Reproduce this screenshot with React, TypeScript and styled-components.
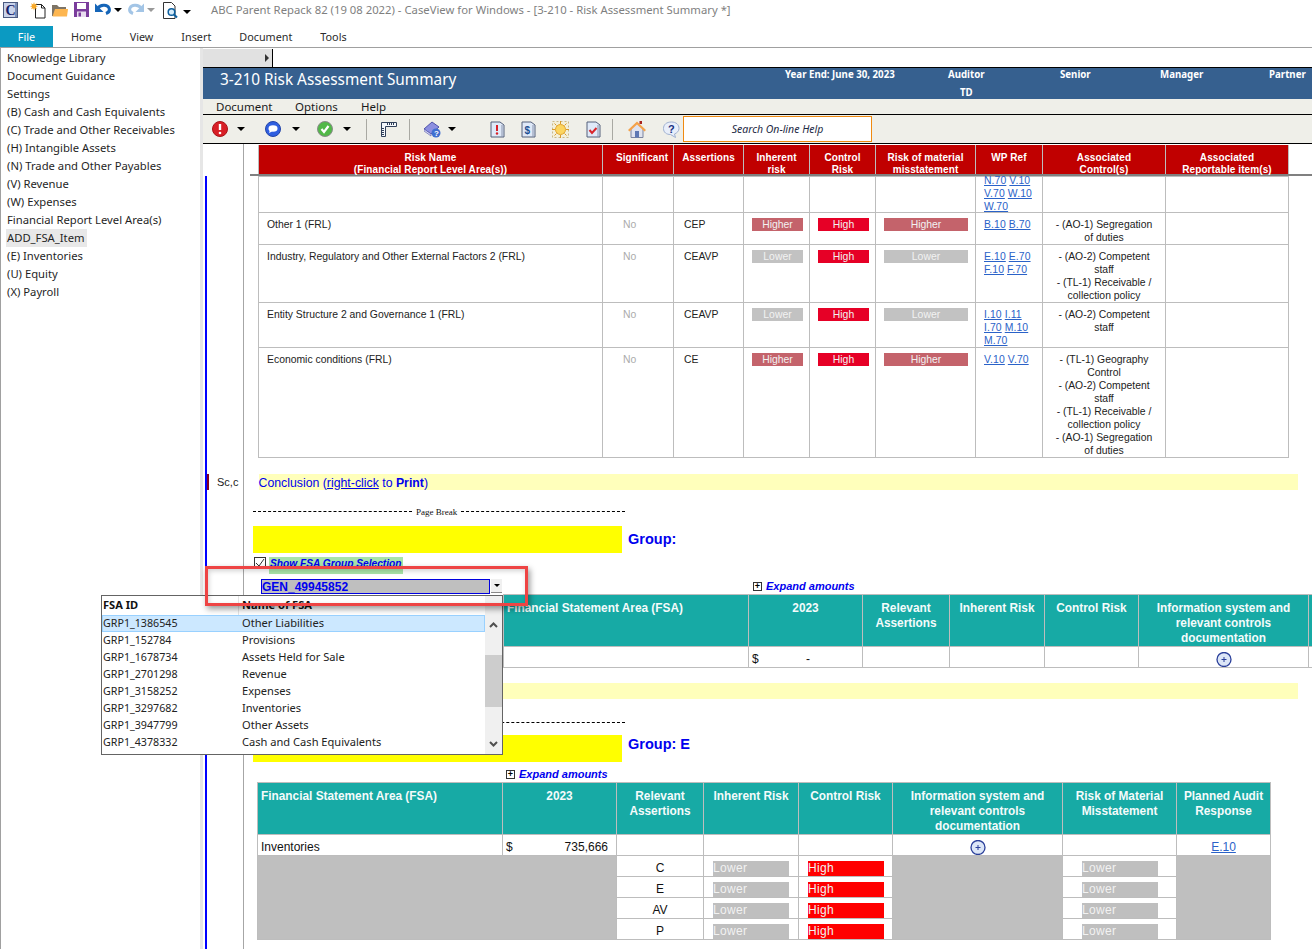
import * as React from 'react';
import styled, { createGlobalStyle } from 'styled-components';

const UI_FONT = '"Noto Sans", "Open Sans", sans-serif';
const DOC_FONT = '"Liberation Sans", Arial, sans-serif';
const GRID_LINE = '#bdbdbd';
const TEAL = '#17aaa5';
const LINK = '#2a62c8';

const GlobalStyle = createGlobalStyle`
  html, body {
    margin: 0;
    padding: 0;
    background: #fff;
  }
  * {
    box-sizing: border-box;
  }
`;

const Page = styled.div`
  position: relative;
  width: 1312px;
  height: 949px;
  overflow: hidden;
  display: flex;
  flex-direction: column;
  background: #fff;
  font-family: ${UI_FONT};
`;

const TitleBar = styled.div`
  height: 26px;
  display: flex;
  align-items: flex-start;
  padding: 2px 0 0 3px;
`;

const QuickIcon = styled.span<{ $ml?: number }>`
  display: inline-flex;
  margin-left: ${(p) => p.$ml ?? 0}px;
`;

const Caret = styled.span<{ $ml?: number; $color?: string; $top?: number }>`
  width: 0;
  height: 0;
  margin-left: ${(p) => p.$ml ?? 0}px;
  margin-top: ${(p) => p.$top ?? 0}px;
  border-left: 4px solid transparent;
  border-right: 4px solid transparent;
  border-top: 4px solid ${(p) => p.$color ?? '#000'};
`;

const WindowTitle = styled.div`
  margin-left: 20px;
  font-size: 11.3px;
  line-height: 16px;
  color: #7f7f7f;
  white-space: nowrap;
`;

const Ribbon = styled.div`
  height: 22px;
  display: flex;
  gap: 28px;
  border-bottom: 1px solid #a0a0a0;
  font-size: 10.8px;
  line-height: 21px;
  color: #2b2b2b;
`;

const FileTab = styled.div`
  width: 53px;
  margin-right: -10px;
  background: #0b9ac2;
  color: #fff;
  text-align: center;
`;

const Body = styled.div`
  flex: 1;
  display: flex;
  min-height: 0;
`;

const Sidebar = styled.nav`
  width: 203px;
  padding: 1px 0 0 5px;
  border-left: 1px solid #a0a0a0;
  border-right: 3px solid #e6e6e6;
`;

const SideItem = styled.div<{ $active?: boolean }>`
  width: fit-content;
  padding: 0 2px 0 1px;
  height: 18px;
  font-size: 11.25px;
  line-height: 18px;
  color: #1f1f1f;
  background: ${(p) => (p.$active ? '#e8e8e8' : 'transparent')};
`;

const Main = styled.main`
  flex: 1;
  min-width: 0;
  display: flex;
  flex-direction: column;
`;

const TopStrip = styled.div`
  height: 19px;
  padding-top: 1px;
`;

const TreeTab = styled.div`
  width: 70px;
  height: 18px;
  display: flex;
  align-items: center;
  justify-content: flex-end;
  padding-right: 3px;
  background: #e1e1e1;
  border-right: 1px solid #000;
  &::after {
    content: '';
    border-top: 4px solid transparent;
    border-bottom: 4px solid transparent;
    border-left: 4px solid #333;
  }
`;

const DocHeader = styled.header`
  height: 32px;
  display: flex;
  border-top: 1px solid #000;
  background: #36608f;
  color: #fff;
`;

const DocTitle = styled.h1`
  width: 582px;
  margin: 0;
  padding: 0 0 0 17px;
  font-size: 15.35px;
  line-height: 22px;
  font-weight: 400;
`;

const MetaColumn = styled.div<{ $w: number }>`
  width: ${(p) => p.$w}px;
  padding-top: 1px;
  font-size: 9.7px;
  line-height: 12px;
  font-weight: 700;
  white-space: nowrap;
`;

const MetaValue = styled.div`
  margin: 6px 0 0 12px;
`;

const MenuBar = styled.div`
  height: 16px;
  display: flex;
  padding-left: 13px;
  background: #efefe9;
  border-bottom: 1px solid #000;
  font-size: 11.5px;
  line-height: 15px;
  color: #1a1a1a;
`;

const MenuItem = styled.span<{ $w: number }>`
  width: ${(p) => p.$w}px;
`;

const Toolbar = styled.div`
  height: 29px;
  display: flex;
  align-items: center;
  padding-left: 9px;
  background: #efefe9;
  border-bottom: 1px solid #000;
`;

const ToolSep = styled.span<{ $ml: number }>`
  width: 1px;
  height: 21px;
  margin-left: ${(p) => p.$ml}px;
  background: #a9a9a3;
`;

const SearchBox = styled.div`
  width: 189px;
  height: 26px;
  margin-left: 3px;
  display: flex;
  align-items: center;
  justify-content: center;
  background: #fff;
  border: 1px solid #f08a10;
  font-size: 10.5px;
  font-style: italic;
  color: #1d2a44;
`;

const DocArea = styled.div`
  flex: 1;
  min-height: 0;
  display: flex;
  overflow: hidden;
`;

const Gutter = styled.div`
  width: 41px;
  flex: none;
  padding-left: 2px;
  border-right: 1px solid #a6a6a6;
`;

const GutterLine = styled.div`
  height: 100%;
  margin-top: 32px;
  padding-top: 298px;
  border-left: 2px solid #0000ff;
`;

const ScopeMark = styled.div`
  height: 16px;
  overflow: hidden;
  border-left: 2px solid #800020;
  padding-left: 8px;
  font-family: ${DOC_FONT};
  font-size: 11px;
  line-height: 17px;
  color: #222;
`;

const DocContent = styled.div`
  flex: 1;
  min-width: 0;
  font-family: ${DOC_FONT};
`;

const FrozenHead = styled.div`
  margin: 1px 0 0 6px;
  padding-left: 8px;
  border-bottom: 2px solid #808080;
`;

const RiskTable = styled.table`
  width: 1030px;
  table-layout: fixed;
  border-collapse: collapse;
  font-size: 10.4px;
  line-height: 13px;
  color: #222;
`;

const RiskHeadCell = styled.th`
  height: 29px;
  padding: 7px 0 0;
  vertical-align: top;
  background: #c00000;
  border-left: 1px solid ${GRID_LINE};
  border-right: 1px solid ${GRID_LINE};
  color: #fff;
  font-size: 10px;
  line-height: 12px;
  font-weight: 700;
  letter-spacing: 0.1px;
  &:nth-child(2) {
    padding-left: 8px;
  }
`;

const RiskHeadLines = styled.div`
  margin-bottom: -2px;
`;

const RiskBodyClip = styled.div`
  margin-left: 14px;
  overflow: hidden;
`;

const RiskRow = styled.tr<{ $h: number }>`
  height: ${(p) => p.$h}px;
`;

const RiskCell = styled.td<{ $align?: string; $muted?: boolean; $pad?: string }>`
  padding: ${(p) => p.$pad ?? '5px 7px 0 8px'};
  vertical-align: top;
  border: 1px solid ${GRID_LINE};
  text-align: ${(p) => p.$align ?? 'left'};
  color: ${(p) => (p.$muted ? '#ababab' : '#222')};
`;

const RiskBadge = styled.div<{ $bg: string }>`
  height: 13px;
  background: ${(p) => p.$bg};
  color: #f2f2f2;
  text-align: center;
`;

// the first row is scrolled a little under the frozen header
const ScrolledRefs = styled.div`
  margin: -3px 0 -2px;
`;

const RefLine = styled.div`
  display: flex;
  gap: 3px;
  white-space: nowrap;
  letter-spacing: 0.1px;
`;

const RefLink = styled.a`
  color: ${LINK};
  text-decoration: underline;
`;

const Conclusion = styled.div<{ $mt: number }>`
  width: 1039px;
  height: 16px;
  margin: ${(p) => p.$mt}px 0 0 14.5px;
  background: #ffffbb;
  color: #0000ee;
  font-size: 12.3px;
  line-height: 18px;
  white-space: nowrap;
`;

const Underlined = styled.span`
  text-decoration: underline;
`;

const PageBreak = styled.div<{ $mt: number }>`
  width: 372px;
  height: 11px;
  margin: ${(p) => p.$mt}px 0 0 9px;
  display: flex;
  align-items: center;
  gap: 4px;
  font-family: "Liberation Serif", serif;
  font-size: 9px;
  color: #111;
  &::before,
  &::after {
    content: '';
    height: 0;
    border-top: 1px dashed #000;
  }
  &::before {
    flex: 0 0 159px;
  }
  &::after {
    flex: 1;
  }
`;

const GroupRow = styled.div<{ $mt: number }>`
  margin: ${(p) => p.$mt}px 0 0 9px;
  display: flex;
  align-items: center;
  gap: 6px;
  color: #0000ee;
  font-size: 14.5px;
  font-weight: 700;
`;

const GroupLabel = styled.span<{ $lift: number }>`
  margin-bottom: ${(p) => p.$lift}px;
`;

const YellowField = styled.div`
  width: 369px;
  height: 27px;
  background: #ffff00;
`;

const CheckRow = styled.div`
  height: 22px;
  margin: 4px 0 0 10px;
  display: flex;
  align-items: flex-start;
  gap: 3px;
`;

const CheckBox = styled.span`
  width: 12px;
  height: 12px;
  display: flex;
  align-items: center;
  justify-content: center;
  border: 1px solid #333;
  background: #fff;
`;

const GreenLabel = styled.span`
  height: 17px;
  padding: 0 1px;
  background: #a8e4a8;
  color: #0000ee;
  font-size: 10.2px;
  line-height: 14px;
  font-weight: 700;
  font-style: italic;
  text-decoration: underline;
`;

const ComboRow = styled.div`
  height: 15px;
  margin-left: 17px;
  display: flex;
  align-items: flex-start;
`;

const ComboField = styled.div`
  width: 229px;
  height: 15px;
  border: 1px solid #0000e0;
  background: #bfbfbf;
  color: #0000ee;
  font-size: 12px;
  line-height: 14px;
  font-weight: 700;
`;

const ComboButton = styled.div`
  width: 11px;
  height: 14px;
  margin-left: 1px;
  display: flex;
  align-items: center;
  justify-content: center;
  background: #f0f0f0;
  border-bottom: 1px solid #888;
  &::after {
    content: '';
    border-left: 3px solid transparent;
    border-right: 3px solid transparent;
    border-top: 3px solid #000;
  }
`;

const ExpandToggle = styled.div<{ $ml: number; $mt?: number }>`
  height: 14px;
  margin: ${(p) => p.$mt ?? 0}px 0 0 ${(p) => p.$ml}px;
  display: flex;
  align-items: center;
  gap: 4px;
  color: #0000ee;
  font-size: 11px;
  font-weight: 700;
  font-style: italic;
  white-space: nowrap;
`;

const PlusBox = styled.span`
  width: 9px;
  height: 9px;
  display: flex;
  align-items: center;
  justify-content: center;
  border: 1px solid #333;
  background: #fff;
  font: 700 9px/7px ${DOC_FONT};
  color: #000;
`;

const FsaTable = styled.table<{ $ml: number; $mt: number }>`
  width: 1013px;
  margin: ${(p) => p.$mt}px 0 0 ${(p) => p.$ml}px;
  table-layout: fixed;
  border-collapse: collapse;
  font-size: 12px;
  line-height: 15px;
  color: #111;
`;

const FsaHeadCell = styled.th<{ $left?: boolean }>`
  height: 51px;
  padding: 6px 2px 0 ${(p) => (p.$left ? 3 : 2)}px;
  vertical-align: top;
  text-align: ${(p) => (p.$left ? 'left' : 'center')};
  background: ${TEAL};
  border: 1px solid ${GRID_LINE};
  color: #f4fbfb;
  font-size: 11.85px;
  font-weight: 700;
`;

const FsaRow = styled.tr<{ $h: number }>`
  height: ${(p) => p.$h}px;
`;

const FsaCell = styled.td<{ $center?: boolean; $fill?: boolean; $pad?: string }>`
  padding: ${(p) => p.$pad ?? '0 2px'};
  vertical-align: bottom;
  border: 1px solid ${GRID_LINE};
  text-align: ${(p) => (p.$center ? 'center' : 'left')};
  background: ${(p) => (p.$fill ? '#bfbfbf' : '#fff')};
`;

const AmountLine = styled.div<{ $pr: number }>`
  display: flex;
  justify-content: space-between;
  padding: 0 ${(p) => p.$pr}px 0 1px;
`;

const FlagBar = styled.div<{ $bg: string; $ml: number }>`
  width: 76px;
  height: 15px;
  margin-left: ${(p) => p.$ml}px;
  background: ${(p) => p.$bg};
  color: #f2f2f2;
  font-size: 12px;
  line-height: 15px;
  letter-spacing: 0.3px;
`;

const LookupPopup = styled.div`
  position: absolute;
  left: 101px;
  top: 595px;
  width: 402px;
  height: 160px;
  display: flex;
  background: #fff;
  border: 1px solid #646464;
`;

const LookupList = styled.div`
  flex: 1;
  font-size: 11.1px;
`;

const LookupHead = styled.div`
  height: 19px;
  display: grid;
  grid-template-columns: 136px 1fr;
  font-weight: 700;
  line-height: 18px;
  color: #111;
`;

const LookupHeadCell = styled.div`
  padding-left: 1px;
  &:nth-child(2) {
    padding-left: 3px;
    border-left: 1px solid #e4e4e4;
  }
`;

const LookupRow = styled.div<{ $selected?: boolean }>`
  height: 17px;
  display: grid;
  grid-template-columns: 139px 1fr;
  padding-left: 1px;
  line-height: 16px;
  color: #222;
  background: ${(p) => (p.$selected ? '#cce8ff' : 'transparent')};
  box-shadow: ${(p) => (p.$selected ? 'inset 0 0 0 1px #99d1ff' : 'none')};
`;

const LookupId = styled.span`
  font-size: 10.7px;
`;

const ScrollTrack = styled.div`
  width: 17px;
  display: flex;
  flex-direction: column;
  align-items: center;
  background: #f0f0f0;
  padding-top: 19px;
`;

const ScrollArrow = styled.div`
  height: 21px;
  display: flex;
  align-items: center;
  justify-content: center;
`;

const ScrollThumb = styled.div`
  width: 100%;
  height: 53px;
  margin-top: 19px;
  margin-bottom: 26px;
  background: #cdcdcd;
`;

const CalloutFrame = styled.div`
  position: absolute;
  left: 205px;
  top: 566px;
  width: 323px;
  height: 40px;
  border: 3px solid #ee4444;
  box-shadow: 2px 3px 6px rgba(0, 0, 0, 0.4), inset 1px 2px 5px rgba(0, 0, 0, 0.18);
`;

const sidebarItems = [
  'Knowledge Library',
  'Document Guidance',
  'Settings',
  '(B) Cash and Cash Equivalents',
  '(C) Trade and Other Receivables',
  '(H) Intangible Assets',
  '(N) Trade and Other Payables',
  '(V) Revenue',
  '(W) Expenses',
  'Financial Report Level Area(s)',
  'ADD_FSA_Item',
  '(E) Inventories',
  '(U) Equity',
  '(X) Payroll',
];

const riskColumns = [344, 71, 70, 66, 66, 100, 67, 123, 123];
const riskHead = [
  ['Risk Name', '(Financial Report Level Area(s))'],
  ['Significant'],
  ['Assertions'],
  ['Inherent', 'risk'],
  ['Control', 'Risk'],
  ['Risk of material', 'misstatement'],
  ['WP Ref'],
  ['Associated', 'Control(s)'],
  ['Associated', 'Reportable item(s)'],
];

type RiskItem = {
  name: string;
  assertions: string;
  level: 'Higher' | 'Lower';
  refs: string[][];
  controls: string[];
  height: number;
};

const riskItems: RiskItem[] = [
  {
    name: 'Other 1 (FRL)',
    assertions: 'CEP',
    level: 'Higher',
    refs: [['B.10', 'B.70']],
    controls: ['- (AO-1) Segregation', 'of duties'],
    height: 32,
  },
  {
    name: 'Industry, Regulatory and Other External Factors 2 (FRL)',
    assertions: 'CEAVP',
    level: 'Lower',
    refs: [['E.10', 'E.70'], ['F.10', 'F.70']],
    controls: ['- (AO-2) Competent', 'staff', '- (TL-1) Receivable /', 'collection policy'],
    height: 58,
  },
  {
    name: 'Entity Structure 2 and Governance 1 (FRL)',
    assertions: 'CEAVP',
    level: 'Lower',
    refs: [['I.10', 'I.11'], ['I.70', 'M.10'], ['M.70']],
    controls: ['- (AO-2) Competent', 'staff'],
    height: 45,
  },
  {
    name: 'Economic conditions (FRL)',
    assertions: 'CE',
    level: 'Higher',
    refs: [['V.10', 'V.70']],
    controls: [
      '- (TL-1) Geography',
      'Control',
      '- (AO-2) Competent',
      'staff',
      '- (TL-1) Receivable /',
      'collection policy',
      '- (AO-1) Segregation',
      'of duties',
    ],
    height: 110,
  },
];

const fsaColumns = [245, 114, 87, 95, 94, 170, 114, 94];
const fsaHead = [
  'Financial Statement Area (FSA)',
  '2023',
  'Relevant Assertions',
  'Inherent Risk',
  'Control Risk',
  'Information system and relevant controls documentation',
  'Risk of Material Misstatement',
  'Planned Audit Response',
];
// the upper table runs off the right edge, its last two headings are out of view
const fsaHeadClipped = fsaHead.slice(0, 6).concat(['', '']);

const lookupRows = [
  ['GRP1_1386545', 'Other Liabilities'],
  ['GRP1_152784', 'Provisions'],
  ['GRP1_1678734', 'Assets Held for Sale'],
  ['GRP1_2701298', 'Revenue'],
  ['GRP1_3158252', 'Expenses'],
  ['GRP1_3297682', 'Inventories'],
  ['GRP1_3947799', 'Other Assets'],
  ['GRP1_4378332', 'Cash and Cash Equivalents'],
];

const levelColor = (level: string): string => (level === 'Higher' ? '#c4636b' : '#c2c2c2');

function AppIcon(): JSX.Element {
  return (
    <svg width="15" height="16" viewBox="0 0 15 16">
      <rect x="0.5" y="0.5" width="14" height="15" fill="#c9d3ea" stroke="#4a5a80" />
      <rect x="12" y="1" width="2" height="14" fill="#7f8fb5" />
      <text x="2.5" y="13" fontFamily="Liberation Serif" fontWeight="700" fontSize="14" fill="#14206a">
        C
      </text>
    </svg>
  );
}

function NewDocIcon(): JSX.Element {
  return (
    <svg width="17" height="17" viewBox="0 0 17 17">
      <path d="M5.5 2.5h6l3.5 3.5v10h-9.5z" fill="#fff" stroke="#222" />
      <path d="M11.5 2.5v3.5h3.5" fill="none" stroke="#222" />
      <path
        d="M4 0l.8 2.4L7 1.3 5.9 3.5 8 4.3l-2.1.8L7 7.3 4.8 6.2 4 8.6l-.8-2.4L1 7.3l1.1-2.2L0 4.3l2.1-.8L1 1.3l2.2 1.1z"
        fill="#f9a825"
      />
    </svg>
  );
}

function FolderIcon(): JSX.Element {
  return (
    <svg width="16" height="15" viewBox="0 0 16 15">
      <path d="M0 3h5l2 2h7v9H0z" fill="#7d7466" />
      <path d="M3 7h13l-1 7.500H0.500z" fill="#fdb650" />
    </svg>
  );
}

function SaveIcon(): JSX.Element {
  return (
    <svg width="15" height="15" viewBox="0 0 15 15">
      <path d="M0 0h15v15H0z" fill="#7a3c9c" />
      <rect x="3" y="1" width="9" height="6" fill="#fff" />
      <rect x="3" y="9.500" width="9" height="5.500" fill="#e9def0" />
      <rect x="4.500" y="10.500" width="2.500" height="4" fill="#7a3c9c" />
    </svg>
  );
}

function ArcArrow({ color, flip }: { color: string; flip?: boolean }): JSX.Element {
  return (
    <svg width="16" height="13" viewBox="0 0 16 13" style={flip ? { transform: 'scaleX(-1)' } : undefined}>
      <path d="M3 6C5 3 12 1.500 14 6c1 2.500-.5 4.500-3 5.500" fill="none" stroke={color} strokeWidth="3" />
      <path d="M0 1.500V10h8.500z" fill={color} />
    </svg>
  );
}

function PreviewIcon(): JSX.Element {
  return (
    <svg width="15" height="17" viewBox="0 0 15 17">
      <path d="M.5.500h8l3.500 3.500v12.500H.5z" fill="#fff" stroke="#333" />
      <circle cx="8.500" cy="10" r="3.300" fill="#d6ecfa" stroke="#0d5f9e" strokeWidth="1.500" />
      <path d="M11 12.500l3 3" stroke="#0d5f9e" strokeWidth="2" />
    </svg>
  );
}

function RoundGlyph({ fill, ring, children }: { fill: string; ring: string; children: React.ReactNode }): JSX.Element {
  return (
    <svg width="16" height="16" viewBox="0 0 16 16">
      <circle cx="8" cy="8" r="7.500" fill={fill} stroke={ring} />
      {children}
    </svg>
  );
}

function BookIcon(): JSX.Element {
  return (
    <svg width="17" height="17" viewBox="0 0 17 17">
      <path d="M0 8l8-7 7 5-8 7z" fill="#8c8fe0" stroke="#4f52a8" />
      <path d="M0 8l7 5v2l-7-5z" fill="#d6d7f5" stroke="#4f52a8" strokeWidth="0.600" />
      <circle cx="12" cy="12" r="4.500" fill="#3f6fd0" />
      <text x="10" y="15" fontFamily="Liberation Sans" fontWeight="700" fontSize="8" fill="#fff">
        ?
      </text>
    </svg>
  );
}

function RulerIcon(): JSX.Element {
  return (
    <svg width="16" height="15" viewBox="0 0 16 15">
      <path d="M.5.500h15v4h-11v10h-4z" fill="#f4f7fb" stroke="#30405a" />
      <path d="M6.500 1v2M8.500 1v2M10.500 1v2M12.500 1v2M1 6.500h2M1 8.500h2M1 10.500h2M1 12.500h2" stroke="#30405a" />
    </svg>
  );
}

function PageGlyph({ children }: { children: React.ReactNode }): JSX.Element {
  return (
    <svg width="15" height="17" viewBox="0 0 15 17">
      <path d="M1 1h9l4 3v12H1z" fill="#dfe9f8" stroke="#55607a" />
      <path d="M12 4v12" stroke="#8a94ad" />
      {children}
    </svg>
  );
}

function SunIcon(): JSX.Element {
  return (
    <svg width="17" height="17" viewBox="0 0 17 17">
      <rect x="0.500" y="0.500" width="16" height="16" fill="#f3efd8" stroke="#c9b888" strokeDasharray="2 2" />
      <path d="M8.500 0v3M8.500 14v3M0 8.500h3M14 8.500h3M2.500 2.500l2 2M12.500 12.500l2 2M14.500 2.500l-2 2M4.500 12.500l-2 2" stroke="#d99a2b" />
      <circle cx="8.500" cy="8.500" r="5" fill="#fcd55f" stroke="#e0a530" />
    </svg>
  );
}

function HomeIcon(): JSX.Element {
  return (
    <svg width="18" height="17" viewBox="0 0 18 17">
      <path d="M3 8v8.500h12V8L9 2z" fill="#dfe3ef" stroke="#7b84a0" />
      <path d="M0 9l9-8.500L18 9l-1.500 1.500L9 3.500 1.500 10.500z" fill="#f4a24a" />
      <rect x="11.500" y="0" width="2.500" height="3" fill="#a8221e" />
      <rect x="7" y="10" width="4" height="6.500" fill="#5d78b4" />
    </svg>
  );
}

function HelpBubbleIcon(): JSX.Element {
  return (
    <svg width="17" height="17" viewBox="0 0 17 17">
      <path d="M8.500 1C3.500 1 .5 3.500.5 7.500s3 6 7 6l5 3-1-3.500c2.500-1 4.500-3 4.500-5.500C16 3.500 13 1 8.500 1z" fill="#e8eefa" stroke="#9fb0d0" />
      <text x="5" y="12" fontFamily="Liberation Sans" fontWeight="700" fontSize="11" fill="#18307f">
        ?
      </text>
    </svg>
  );
}

function ExpandCircle(): JSX.Element {
  return (
    <svg width="16" height="15" viewBox="0 0 16 15" style={{ display: 'block', margin: '0 auto' }}>
      <circle cx="8" cy="7.500" r="7" fill="#dce6f7" stroke="#2a3f9a" strokeWidth="1.300" />
      <path d="M5.500 7.500h5M8 5v5" stroke="#2a3f9a" />
    </svg>
  );
}

function Chevron({ up }: { up?: boolean }): JSX.Element {
  return (
    <svg width="9" height="6" viewBox="0 0 9 6">
      <path d={up ? 'M1 5l3.500-3.500L8 5' : 'M1 1l3.500 3.500L8 1'} fill="none" stroke="#505050" strokeWidth="2" />
    </svg>
  );
}

function RefLines({ lines }: { lines: string[][] }): JSX.Element {
  return (
    <>
      {lines.map((line) => (
        <RefLine key={line.join()}>
          {line.map((ref) => (
            <RefLink key={ref}>{ref}</RefLink>
          ))}
        </RefLine>
      ))}
    </>
  );
}

function RiskCols(): JSX.Element {
  return (
    <colgroup>
      {riskColumns.map((w, i) => (
        <col key={i} style={{ width: w }} />
      ))}
    </colgroup>
  );
}

function FsaCols(): JSX.Element {
  return (
    <colgroup>
      {fsaColumns.map((w, i) => (
        <col key={i} style={{ width: w }} />
      ))}
    </colgroup>
  );
}

function FsaHeader({ labels }: { labels: string[] }): JSX.Element {
  return (
    <thead>
      <tr>
        {labels.map((label, i) => (
          <FsaHeadCell key={i} $left={i === 0}>
            {label}
          </FsaHeadCell>
        ))}
      </tr>
    </thead>
  );
}

export default function App(): JSX.Element {
  return (
    <Page>
      <GlobalStyle />
      <TitleBar>
        <AppIcon />
        <QuickIcon $ml={12}>
          <NewDocIcon />
        </QuickIcon>
        <QuickIcon $ml={5}>
          <FolderIcon />
        </QuickIcon>
        <QuickIcon $ml={6}>
          <SaveIcon />
        </QuickIcon>
        <QuickIcon $ml={6}>
          <ArcArrow color="#1565b8" />
        </QuickIcon>
        <Caret $ml={3} $top={6} />
        <QuickIcon $ml={6}>
          <ArcArrow color="#a3c5e6" flip />
        </QuickIcon>
        <Caret $ml={3} $top={6} $color="#999" />
        <QuickIcon $ml={8}>
          <PreviewIcon />
        </QuickIcon>
        <Caret $ml={5} $top={8} />
        <WindowTitle>ABC Parent Repack 82 (19 08 2022) - CaseView for Windows - [3-210 - Risk Assessment Summary *]</WindowTitle>
      </TitleBar>
      <Ribbon>
        <FileTab>File</FileTab>
        <span>Home</span>
        <span>View</span>
        <span>Insert</span>
        <span>Document</span>
        <span>Tools</span>
      </Ribbon>
      <Body>
        <Sidebar>
          {sidebarItems.map((item) => (
            <SideItem key={item} $active={item === 'ADD_FSA_Item'}>
              {item}
            </SideItem>
          ))}
        </Sidebar>
        <Main>
          <TopStrip>
            <TreeTab />
          </TopStrip>
          <DocHeader>
            <DocTitle>3-210 Risk Assessment Summary</DocTitle>
            <MetaColumn $w={163}>Year End: June 30, 2023</MetaColumn>
            <MetaColumn $w={112}>
              Auditor
              <MetaValue>TD</MetaValue>
            </MetaColumn>
            <MetaColumn $w={100}>Senior</MetaColumn>
            <MetaColumn $w={109}>Manager</MetaColumn>
            <MetaColumn $w={43}>Partner</MetaColumn>
          </DocHeader>
          <MenuBar>
            <MenuItem $w={79}>Document</MenuItem>
            <MenuItem $w={66}>Options</MenuItem>
            <MenuItem $w={40}>Help</MenuItem>
          </MenuBar>
          <Toolbar>
            <QuickIcon>
              <RoundGlyph fill="#d81f26" ring="#a81218">
                <path d="M8 3v6" stroke="#fff" strokeWidth="2.400" />
                <circle cx="8" cy="12" r="1.300" fill="#fff" />
              </RoundGlyph>
            </QuickIcon>
            <Caret $ml={9} />
            <QuickIcon $ml={20}>
              <RoundGlyph fill="#2f5fe0" ring="#2344a8">
                <ellipse cx="8" cy="7.500" rx="4.500" ry="3.300" fill="#fff" />
                <path d="M5 9l-1 3 3-1.500z" fill="#fff" />
              </RoundGlyph>
            </QuickIcon>
            <Caret $ml={11} />
            <QuickIcon $ml={17}>
              <RoundGlyph fill="#52b848" ring="#8a8a8a">
                <path d="M4.500 8l2.500 3 4.500-6" fill="none" stroke="#fff" strokeWidth="2.200" />
              </RoundGlyph>
            </QuickIcon>
            <Caret $ml={10} />
            <ToolSep $ml={15} />
            <QuickIcon $ml={14}>
              <RulerIcon />
            </QuickIcon>
            <ToolSep $ml={12} />
            <QuickIcon $ml={14}>
              <BookIcon />
            </QuickIcon>
            <Caret $ml={7} />
            <QuickIcon $ml={34}>
              <PageGlyph>
                <path d="M7 4v6" stroke="#d81f26" strokeWidth="2" />
                <circle cx="7" cy="12.500" r="1.200" fill="#d81f26" />
              </PageGlyph>
            </QuickIcon>
            <QuickIcon $ml={16}>
              <PageGlyph>
                <text x="3.500" y="13" fontFamily="Liberation Sans" fontWeight="700" fontSize="10" fill="#1d4f91">
                  $
                </text>
              </PageGlyph>
            </QuickIcon>
            <QuickIcon $ml={16}>
              <SunIcon />
            </QuickIcon>
            <QuickIcon $ml={17}>
              <PageGlyph>
                <path d="M3.500 9l2.500 3 4.500-5" fill="none" stroke="#d8252a" strokeWidth="2" />
              </PageGlyph>
            </QuickIcon>
            <ToolSep $ml={11} />
            <QuickIcon $ml={15}>
              <HomeIcon />
            </QuickIcon>
            <QuickIcon $ml={17}>
              <HelpBubbleIcon />
            </QuickIcon>
            <SearchBox>Search On-line Help</SearchBox>
          </Toolbar>
          <DocArea>
            <Gutter>
              <GutterLine>
                <ScopeMark>Sc,c</ScopeMark>
              </GutterLine>
            </Gutter>
            <DocContent>
              <FrozenHead>
                <RiskTable>
                  <RiskCols />
                  <thead>
                    <tr>
                      {riskHead.map((lines) => (
                        <RiskHeadCell key={lines.join()}>
                          <RiskHeadLines>
                            {lines.map((line) => (
                              <div key={line}>{line}</div>
                            ))}
                          </RiskHeadLines>
                        </RiskHeadCell>
                      ))}
                    </tr>
                  </thead>
                </RiskTable>
              </FrozenHead>
              <RiskBodyClip>
                <RiskTable>
                  <RiskCols />
                  <tbody>
                    <RiskRow $h={36}>
                      <RiskCell />
                      <RiskCell />
                      <RiskCell />
                      <RiskCell />
                      <RiskCell />
                      <RiskCell />
                      <RiskCell $pad="0 8px">
                        <ScrolledRefs>
                          <RefLines lines={[['N.70', 'V.10'], ['V.70', 'W.10'], ['W.70']]} />
                        </ScrolledRefs>
                      </RiskCell>
                      <RiskCell />
                      <RiskCell />
                    </RiskRow>
                    {riskItems.map((item) => (
                      <RiskRow key={item.name} $h={item.height}>
                        <RiskCell>{item.name}</RiskCell>
                        <RiskCell $muted $pad="5px 0 0 20px">
                          No
                        </RiskCell>
                        <RiskCell $pad="5px 0 0 10px">{item.assertions}</RiskCell>
                        <RiskCell $pad="5px 6px 0 8px">
                          <RiskBadge $bg={levelColor(item.level)}>{item.level}</RiskBadge>
                        </RiskCell>
                        <RiskCell $pad="5px 6px 0 8px">
                          <RiskBadge $bg="#e60026">High</RiskBadge>
                        </RiskCell>
                        <RiskCell>
                          <RiskBadge $bg={levelColor(item.level)}>{item.level}</RiskBadge>
                        </RiskCell>
                        <RiskCell>
                          <RefLines lines={item.refs} />
                        </RiskCell>
                        <RiskCell $align="center" $pad="5px 2px 0">
                          {item.controls.map((line) => (
                            <div key={line}>{line}</div>
                          ))}
                        </RiskCell>
                        <RiskCell />
                      </RiskRow>
                    ))}
                  </tbody>
                </RiskTable>
              </RiskBodyClip>
              <Conclusion $mt={16}>
                Conclusion (<Underlined>right-click</Underlined> to <b>Print</b>)
              </Conclusion>
              <PageBreak $mt={16}>Page Break</PageBreak>
              <GroupRow $mt={9}>
                <YellowField />
                <GroupLabel $lift={2}>Group:</GroupLabel>
              </GroupRow>
              <CheckRow>
                <CheckBox>
                  <svg width="10" height="10" viewBox="0 0 10 10">
                    <path d="M1 5l3 3 5-7" fill="none" stroke="#333" />
                  </svg>
                </CheckBox>
                <GreenLabel>Show FSA Group Selection</GreenLabel>
              </CheckRow>
              <ComboRow>
                <ComboField>GEN_49945852</ComboField>
                <ComboButton />
                <ExpandToggle $ml={251}>
                  <PlusBox>+</PlusBox>
                  Expand amounts
                </ExpandToggle>
              </ComboRow>
              <FsaTable $ml={259} $mt={0}>
                <FsaCols />
                <FsaHeader labels={fsaHeadClipped} />
                <tbody>
                  <FsaRow $h={21}>
                    <FsaCell />
                    <FsaCell>
                      <AmountLine $pr={50}>
                        <span>$</span>
                        <span>-</span>
                      </AmountLine>
                    </FsaCell>
                    <FsaCell />
                    <FsaCell />
                    <FsaCell />
                    <FsaCell>
                      <ExpandCircle />
                    </FsaCell>
                    <FsaCell />
                    <FsaCell />
                  </FsaRow>
                </tbody>
              </FsaTable>
              <Conclusion $mt={15} />
              <PageBreak $mt={18}>Page Break</PageBreak>
              <GroupRow $mt={7}>
                <YellowField />
                <GroupLabel $lift={9}>Group: E</GroupLabel>
              </GroupRow>
              <ExpandToggle $ml={262} $mt={5}>
                <PlusBox>+</PlusBox>
                Expand amounts
              </ExpandToggle>
              <FsaTable $ml={13} $mt={1}>
                <FsaCols />
                <FsaHeader labels={fsaHead} />
                <tbody>
                  <FsaRow $h={21}>
                    <FsaCell $pad="0 3px">Inventories</FsaCell>
                    <FsaCell>
                      <AmountLine $pr={6}>
                        <span>$</span>
                        <span>735,666</span>
                      </AmountLine>
                    </FsaCell>
                    <FsaCell />
                    <FsaCell />
                    <FsaCell />
                    <FsaCell>
                      <ExpandCircle />
                    </FsaCell>
                    <FsaCell />
                    <FsaCell $center>
                      <RefLink>E.10</RefLink>
                    </FsaCell>
                  </FsaRow>
                  {['C', 'E', 'AV', 'P'].map((code, i) => (
                    <FsaRow key={code} $h={21}>
                      {i === 0 && <FsaCell colSpan={2} rowSpan={4} $fill />}
                      <FsaCell $center>{code}</FsaCell>
                      <FsaCell $pad="0">
                        <FlagBar $bg="#bfbfbf" $ml={9}>
                          Lower
                        </FlagBar>
                      </FsaCell>
                      <FsaCell $pad="0">
                        <FlagBar $bg="#ff0000" $ml={9}>
                          High
                        </FlagBar>
                      </FsaCell>
                      {i === 0 && <FsaCell rowSpan={4} $fill />}
                      <FsaCell $pad="0">
                        <FlagBar $bg="#bfbfbf" $ml={19}>
                          Lower
                        </FlagBar>
                      </FsaCell>
                      {i === 0 && <FsaCell rowSpan={4} $fill />}
                    </FsaRow>
                  ))}
                </tbody>
              </FsaTable>
            </DocContent>
          </DocArea>
        </Main>
      </Body>
      <LookupPopup>
        <LookupList>
          <LookupHead>
            <LookupHeadCell>FSA ID</LookupHeadCell>
            <LookupHeadCell>Name of FSA</LookupHeadCell>
          </LookupHead>
          {lookupRows.map(([id, name], i) => (
            <LookupRow key={id} $selected={i === 0}>
              <LookupId>{id}</LookupId>
              <span>{name}</span>
            </LookupRow>
          ))}
        </LookupList>
        <ScrollTrack>
          <ScrollArrow>
            <Chevron up />
          </ScrollArrow>
          <ScrollThumb />
          <ScrollArrow>
            <Chevron />
          </ScrollArrow>
        </ScrollTrack>
      </LookupPopup>
      <CalloutFrame />
    </Page>
  );
}
